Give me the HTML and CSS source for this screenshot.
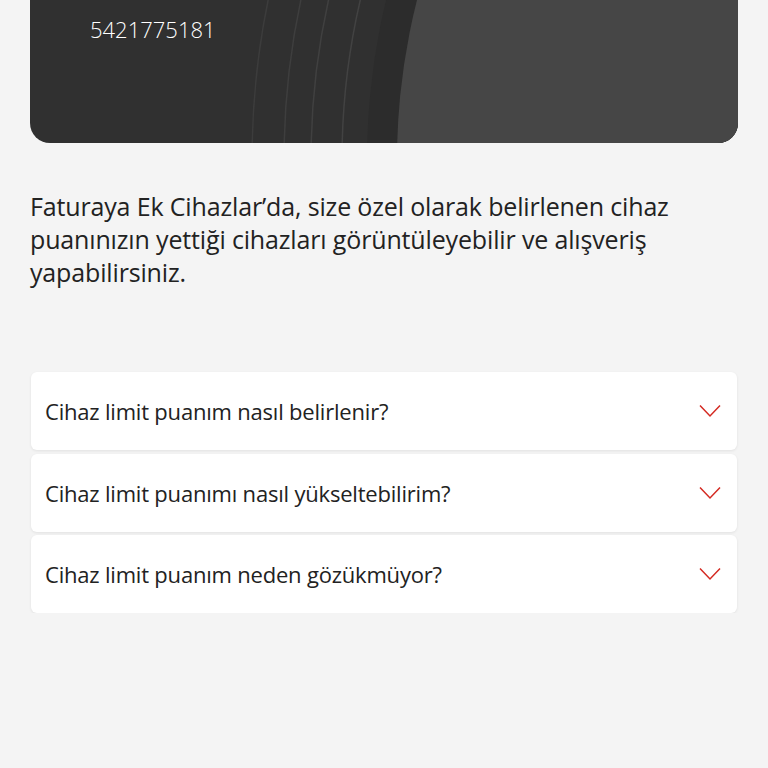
FILE: index.html
```html
<!DOCTYPE html>
<html lang="tr">
<head>
    <meta charset="UTF-8">
    <meta name="viewport" content="width=device-width, initial-scale=1.0">
    <title>Faturaya Ek Cihazlar</title>
    <link rel="stylesheet" href="styles.css">
</head>
<body>
    <!-- Line card -->
    <div class="line-card">
        <svg class="card-rings" viewBox="0 0 708 183" preserveAspectRatio="none">
            <circle cx="1017" cy="200" r="795" fill="none" stroke="#3c3c3c" stroke-width="1.5"/>
            <circle cx="1017" cy="200" r="763" fill="none" stroke="#3e3e3e" stroke-width="1.5"/>
            <circle cx="1017" cy="200" r="736" fill="none" stroke="#404040" stroke-width="1.5"/>
            <circle cx="1017" cy="200" r="705" fill="none" stroke="#424242" stroke-width="1.5"/>
            <circle cx="1017" cy="200" r="680" fill="#2c2c2c"/>
            <circle cx="1017" cy="200" r="650" fill="#464646"/>
        </svg>
        <p class="line-number">5421775181</p>
    </div>

    <p class="intro">Faturaya Ek Cihazlar’da, size özel olarak belirlenen cihaz puanınızın yettiği cihazları görüntüleyebilir ve alışveriş yapabilirsiniz.</p>

    <!-- FAQ -->
    <div class="faq">
        <div class="faq-item">
            <span>Cihaz limit puanım nasıl belirlenir?</span>
            <svg class="chevron" viewBox="0 0 22 14"><path d="M1 1.5 L11 12 L21 1.5" fill="none" stroke="#d42a22" stroke-width="1.5"/></svg>
        </div>
        <div class="faq-item">
            <span>Cihaz limit puanımı nasıl yükseltebilirim?</span>
            <svg class="chevron" viewBox="0 0 22 14"><path d="M1 1.5 L11 12 L21 1.5" fill="none" stroke="#d42a22" stroke-width="1.5"/></svg>
        </div>
        <div class="faq-item">
            <span>Cihaz limit puanım neden gözükmüyor?</span>
            <svg class="chevron" viewBox="0 0 22 14"><path d="M1 1.5 L11 12 L21 1.5" fill="none" stroke="#d42a22" stroke-width="1.5"/></svg>
        </div>
    </div>
</body>
</html>
```

FILE: styles.css
```css
body {
    font-family: "Open Sans", "Noto Sans", sans-serif;
    background: #f4f4f4;
    color: #222;
    margin: 0;
    padding: 0 30px;
}

.line-card {
    position: relative;
    margin-top: -40px;
    height: 183px;
    background: #303030;
    border-radius: 20px;
    overflow: hidden;
}

.card-rings {
    position: absolute;
    top: 0;
    left: 0;
    width: 100%;
    height: 100%;
}

.line-number {
    position: relative;
    margin: 0;
    padding: 56px 0 0 60px;
    color: #fff;
    font-size: 22px;
    line-height: 26px;
    font-weight: 300;
}

.intro {
    margin: 47px 0 0;
    font-size: 25px;
    line-height: 33px;
    letter-spacing: -0.15px;
}

.faq {
    display: flex;
    flex-direction: column;
    gap: 3.5px;
    margin: 83px 1px 0;
}

.faq-item {
    display: flex;
    align-items: center;
    justify-content: space-between;
    height: 78px;
    padding: 0 16px 0 14px;
    background: #fff;
    border-radius: 6px;
    box-shadow: 0 1px 3px rgba(0, 0, 0, 0.08);
    font-size: 22px;
    letter-spacing: -0.2px;
}

.chevron {
    width: 22px;
    height: 14px;
}
```
